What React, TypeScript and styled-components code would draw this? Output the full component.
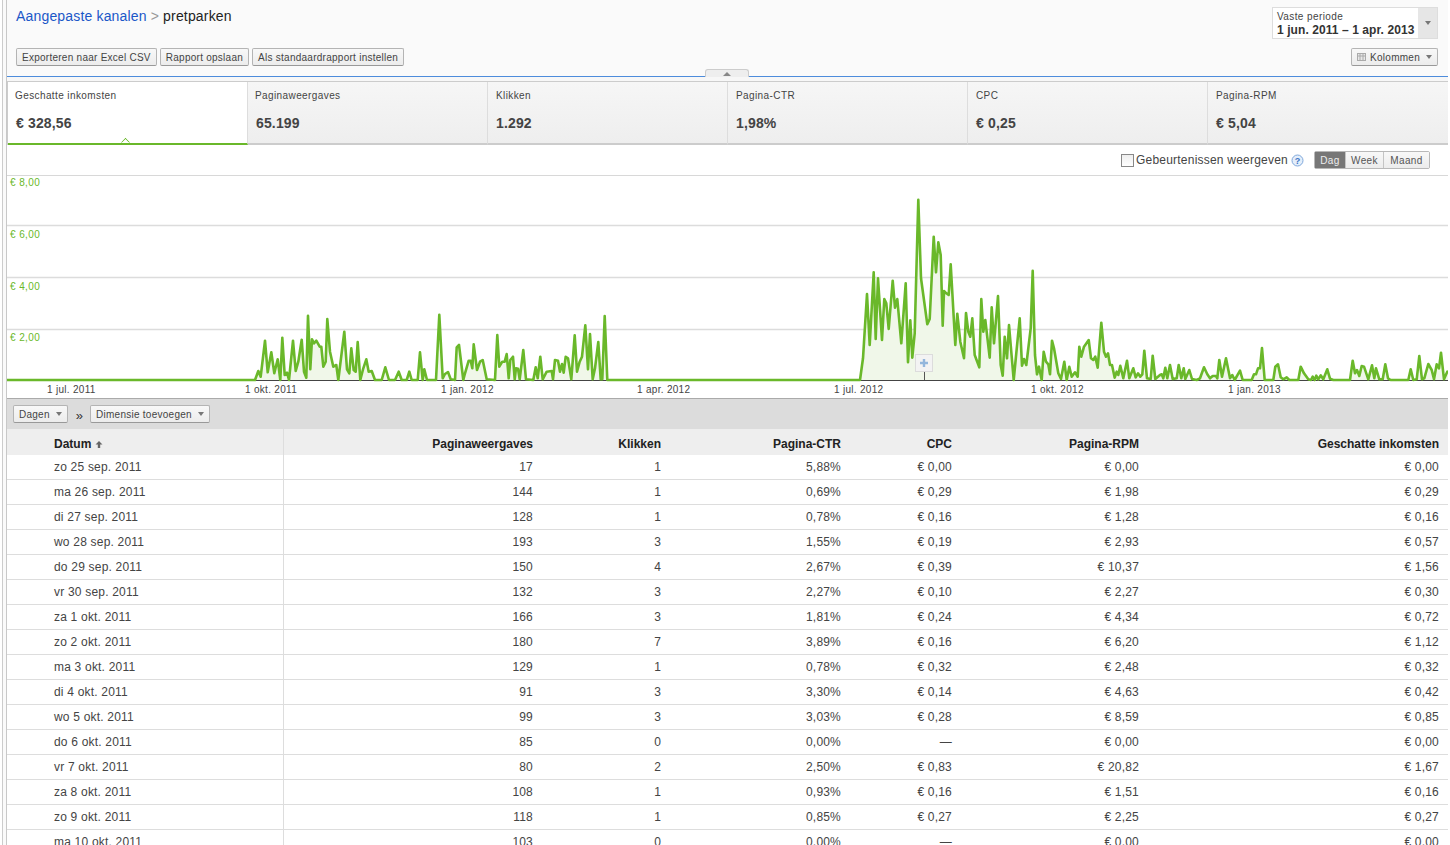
import React from 'react'
import styled, { createGlobalStyle } from 'styled-components'

type Pt = [number, number]

// traced per chart region, numbers are 3x crop coordinates from (x0, y0)
const toPage = (x0: number, y0: number, pts: Pt[]): Pt[] => pts.map(([x, y]) => [x0 + x / 3, y0 + y / 3])

const partA = toPage(255, 310, [
  [0,210],[10,183],[17,200],[30,92],[38,187],[49,127],[58,190],[68,148],[76,210],[82,83],[89,195],[96,188],[102,210],[114,92],[122,183],[130,155],[140,89],[147,185],[154,203],[159,17],[166,178],[171,88],[177,100],[184,92],[194,110],[199,110],[205,170],[212,155],[217,27],[225,125],[235,170],[244,165],[250,210],[268,65],[276,178],[283,190],[289,115],[296,180],[302,185],[308,96],[316,210],[325,175],[334,148],[341,185],[350,183],[360,210],[380,210],[391,172],[402,210],[420,210],[431,185],[440,210],[455,210],[463,185],[470,210],[488,210],[495,127],[503,210],[508,178],[516,210],
])
const partB = toPage(430, 310, [
  [18,210],[28,14],[38,205],[45,192],[54,186],[62,208],[75,210],[80,112],[87,105],[100,210],[105,190],[116,152],[122,152],[127,175],[131,103],[141,180],[150,155],[158,150],[170,208],[195,210],[202,75],[208,170],[217,155],[224,155],[230,132],[236,205],[241,150],[249,140],[254,208],[258,175],[264,176],[269,208],[280,120],[288,208],[310,210],[317,172],[323,205],[331,140],[338,208],[350,185],[365,183],[369,208],[375,150],[384,152],[390,185],[396,162],[401,188],[407,140],[414,145],[424,208],[434,76],[441,185],[449,155],[456,140],[466,46],[474,178],[480,72],[488,208],[495,175],[505,96],[512,208],[517,208],[524,18],[532,210],
])
const partC = toPage(855, 195, [
  [15,555],[24,490],[36,297],[44,450],[56,232],[62,432],[69,250],[81,435],[88,312],[94,325],[101,402],[113,257],[120,338],[127,312],[139,445],[152,265],[159,502],[166,376],[172,488],[179,415],[190,14],[198,250],[217,388],[224,372],[236,125],[243,232],[250,142],[257,180],[263,392],[267,288],[274,295],[281,300],[287,208],[301,450],[307,356],[316,440],[327,490],[333,354],[340,410],[346,425],[352,370],[359,480],[373,517],[379,312],[385,410],[391,375],[404,488],[410,337],[417,445],[429,303],[437,510],[443,542],[449,425],[456,490],[462,390],[476,555],[494,370],[501,512],[507,492],[514,510],[527,400],[533,227],[540,480],[546,538],[552,515],[560,555],[566,470],
])
const partD = toPage(1030, 315, [
  [48,140],[55,148],[60,178],[66,77],[72,100],[85,175],[93,192],[103,140],[110,195],[118,155],[125,185],[135,172],[143,185],[148,95],[154,125],[162,95],[176,75],[183,130],[190,135],[196,125],[203,158],[214,23],[222,110],[228,125],[234,115],[240,150],[246,150],[254,188],[260,170],[265,180],[271,152],[280,190],[291,137],[298,190],[310,160],[317,187],[324,175],[331,185],[337,178],[343,107],[351,190],[362,192],[368,122],[376,192],[390,180],[395,178],[400,190],[406,158],[412,190],[420,150],[428,192],[440,190],[446,150],[454,190],[461,160],[466,192],[478,165],[486,192],[500,195],[510,190],[522,157],[532,178],[540,190],[548,183],[558,183],[562,190],[568,135],[576,185],[588,130],[600,190],[607,180],[614,195],
])
const partE = toPage(1240, 340, [
  [0,92],[8,120],[35,120],[42,103],[48,103],[54,85],[60,85],[66,24],[74,120],[100,120],[106,80],[114,73],[122,112],[130,118],[140,112],[148,120],[175,120],[182,80],[192,100],[205,118],[213,120],[218,110],[224,120],[229,107],[235,118],[242,106],[250,118],[262,88],[270,116],[280,120],[330,120],[338,62],[345,100],[351,90],[358,108],[365,78],[372,80],[385,118],[396,76],[403,115],[408,85],[418,118],[428,118],[436,73],[444,115],[452,120],[505,120],[512,88],[520,120],[530,118],[538,48],[546,118],[553,115],[565,72],[575,90],[582,118],[590,73],[597,85],[603,38],[612,118],[622,95],
])

const BASE = 380
const linePts: Pt[] = [[7, BASE], ...partA, ...partB, ...partC, ...partD, ...partE, [1448, 372]]
const line = linePts.map(([x, y]) => `${x.toFixed(1)},${y.toFixed(1)}`).join(' ')
const area = `7,${BASE} ${line} 1448,${BASE}`

const gridLines = [225.5, 277.5, 329.5]
const yLabels = [
  { y: 185.5, t: '€ 8,00' },
  { y: 237.5, t: '€ 6,00' },
  { y: 289.5, t: '€ 4,00' },
  { y: 340.5, t: '€ 2,00' },
]
const xLabels = [
  { x: 47, t: '1 jul. 2011' },
  { x: 245, t: '1 okt. 2011' },
  { x: 441, t: '1 jan. 2012' },
  { x: 637, t: '1 apr. 2012' },
  { x: 834, t: '1 jul. 2012' },
  { x: 1031, t: '1 okt. 2012' },
  { x: 1228, t: '1 jan. 2013' },
]

const metrics = [
  { label: 'Geschatte inkomsten', value: '€ 328,56' },
  { label: 'Paginaweergaves', value: '65.199' },
  { label: 'Klikken', value: '1.292' },
  { label: 'Pagina-CTR', value: '1,98%' },
  { label: 'CPC', value: '€ 0,25' },
  { label: 'Pagina-RPM', value: '€ 5,04' },
]

const rows = [
  ['zo 25 sep. 2011', '17', '1', '5,88%', '€ 0,00', '€ 0,00', '€ 0,00'],
  ['ma 26 sep. 2011', '144', '1', '0,69%', '€ 0,29', '€ 1,98', '€ 0,29'],
  ['di 27 sep. 2011', '128', '1', '0,78%', '€ 0,16', '€ 1,28', '€ 0,16'],
  ['wo 28 sep. 2011', '193', '3', '1,55%', '€ 0,19', '€ 2,93', '€ 0,57'],
  ['do 29 sep. 2011', '150', '4', '2,67%', '€ 0,39', '€ 10,37', '€ 1,56'],
  ['vr 30 sep. 2011', '132', '3', '2,27%', '€ 0,10', '€ 2,27', '€ 0,30'],
  ['za 1 okt. 2011', '166', '3', '1,81%', '€ 0,24', '€ 4,34', '€ 0,72'],
  ['zo 2 okt. 2011', '180', '7', '3,89%', '€ 0,16', '€ 6,20', '€ 1,12'],
  ['ma 3 okt. 2011', '129', '1', '0,78%', '€ 0,32', '€ 2,48', '€ 0,32'],
  ['di 4 okt. 2011', '91', '3', '3,30%', '€ 0,14', '€ 4,63', '€ 0,42'],
  ['wo 5 okt. 2011', '99', '3', '3,03%', '€ 0,28', '€ 8,59', '€ 0,85'],
  ['do 6 okt. 2011', '85', '0', '0,00%', '—', '€ 0,00', '€ 0,00'],
  ['vr 7 okt. 2011', '80', '2', '2,50%', '€ 0,83', '€ 20,82', '€ 1,67'],
  ['za 8 okt. 2011', '108', '1', '0,93%', '€ 0,16', '€ 1,51', '€ 0,16'],
  ['zo 9 okt. 2011', '118', '1', '0,85%', '€ 0,27', '€ 2,25', '€ 0,27'],
  ['ma 10 okt. 2011', '103', '0', '0,00%', '—', '€ 0,00', '€ 0,00'],
]

const columns = ['Paginaweergaves', 'Klikken', 'Pagina-CTR', 'CPC', 'Pagina-RPM', 'Geschatte inkomsten']

const App = () => {
  return (
    <Page>
      <GlobalStyle />
      <Rail />
      <Main>
        <Header>
          <HeaderLeft>
            <Breadcrumb>
              <CrumbLink>Aangepaste kanalen</CrumbLink>
              <CrumbSep>&gt;</CrumbSep>
              <span>pretparken</span>
            </Breadcrumb>
            <ButtonRow>
              <Button>Exporteren naar Excel CSV</Button>
              <Button>Rapport opslaan</Button>
              <Button>Als standaardrapport instellen</Button>
            </ButtonRow>
          </HeaderLeft>
          <HeaderRight>
            <DatePicker>
              <DateText>
                <DateLabel>Vaste periode</DateLabel>
                <DateValue>1 jun. 2011 – 1 apr. 2013</DateValue>
              </DateText>
              <DateArrow>
                <Caret />
              </DateArrow>
            </DatePicker>
            <Button>
              <ColumnsIcon width='9' height='8' viewBox='0 0 9 8'>
                <rect x='0.5' y='0.5' width='8' height='7' fill='#e8e8e8' stroke='#aaa' />
                <path d='M0 3h9M3 0v8M6 0v8' stroke='#aaa' fill='none' />
              </ColumnsIcon>
              Kolommen
              <Caret />
            </Button>
          </HeaderRight>
          <CollapseTab>
            <CaretUp />
          </CollapseTab>
        </Header>
        <TabGap />
        <TabRow>
          {metrics.map((m, i) => (
            <MetricTab key={m.label} $active={i === 0}>
              <MetricLabel>{m.label}</MetricLabel>
              <MetricValue>{m.value}</MetricValue>
            </MetricTab>
          ))}
        </TabRow>
        <ChartTools>
          <EventsCheck />
          <EventsLabel>Gebeurtenissen weergeven</EventsLabel>
          <svg width='13' height='13' viewBox='0 0 13 13'>
            <circle cx='6.5' cy='6.5' r='5.5' fill='#e4eefa' stroke='#7fa8dc' />
            <text x='6.5' y='10' textAnchor='middle' fontSize='9' fontWeight='bold' fontFamily='Liberation Sans' fill='#3a74c4'>?</text>
          </svg>
          <Segments>
            <Segment $on $w={31}>Dag</Segment>
            <Segment $w={38}>Week</Segment>
            <Segment $w={45}>Maand</Segment>
          </Segments>
        </ChartTools>
        <ChartBox>
          <svg width='1441' height='222' viewBox='7 176 1441 222' style={{ display: 'block' }}>
            {gridLines.map(y => (
              <line key={y} x1='7' x2='1448' y1={y} y2={y} stroke='#dcdcdc' strokeWidth='1.4' />
            ))}
            <polygon points={area} fill='#f0f7e9' />
            <line x1='7' x2='1448' y1='380.5' y2='380.5' stroke='#444' strokeWidth='1' />
            <polyline points={line} fill='none' stroke='#6ab82a' strokeWidth='2.6' strokeLinejoin='round' />
            <line x1='924.5' x2='924.5' y1='372' y2='380' stroke='#555' strokeWidth='1' />
            <rect x='915.5' y='354.5' width='17' height='17' fill='#f3f3f3' stroke='#dcdcdc' />
            <path d='M920 363h8M924 359v8' stroke='#93b6dc' strokeWidth='2.4' fill='none' />
            {yLabels.map(l => (
              <ChartYLabel key={l.t} x='10' y={l.y}>{l.t}</ChartYLabel>
            ))}
            {xLabels.map(l => (
              <ChartXLabel key={l.t} x={l.x} y='393'>{l.t}</ChartXLabel>
            ))}
          </svg>
        </ChartBox>
        <TableTools>
          <Button>
            Dagen
            <Caret />
          </Button>
          <Chevrons>»</Chevrons>
          <Button>
            Dimensie toevoegen
            <Caret />
          </Button>
        </TableTools>
        <HeadRow>
          <DateCell>
            Datum
            <svg width='8' height='8' viewBox='0 0 8 8'>
              <path d='M4 1L7.5 4.5H5.2V8H2.8V4.5H.5z' fill='#666' />
            </svg>
          </DateCell>
          {columns.map(c => (
            <NumCell key={c}>{c}</NumCell>
          ))}
        </HeadRow>
        {rows.map(r => (
          <BodyRow key={r[0]}>
            <DateCell>{r[0]}</DateCell>
            {r.slice(1).map((v, i) => (
              <NumCell key={i}>{v}</NumCell>
            ))}
          </BodyRow>
        ))}
      </Main>
    </Page>
  )
}

const GlobalStyle = createGlobalStyle`
  html, body {
    margin: 0;
    background: #fff;
    overflow: hidden;
  }
  body {
    font-family: "Liberation Sans", Arial, sans-serif;
  }
`

const Page = styled.div`
  display: flex;
  width: 1450px;
  height: 845px;
  overflow: hidden;
  background: #fff;
`

const Rail = styled.div`
  width: 6px;
  flex: none;
  box-sizing: border-box;
  background: linear-gradient(90deg, #fff 2px, #ccc 2px, #ccc 3px, #fafafa 3px);
`

const Main = styled.div`
  width: 1442px;
  flex: none;
  box-sizing: border-box;
  border-left: 1px solid #c8c8c8;
  color: #444;
`

const Header = styled.div`
  position: relative;
  box-sizing: border-box;
  height: 77px;
  background: #fafafa;
  border-bottom: 1px solid #4d8cdc;
  display: flex;
  justify-content: space-between;
`

const HeaderLeft = styled.div`
  padding: 8px 0 0 9px;
`

const HeaderRight = styled.div`
  display: flex;
  flex-direction: column;
  align-items: flex-end;
  gap: 9px;
  padding: 7px 10px 0 0;
`

const Breadcrumb = styled.div`
  display: flex;
  align-items: center;
  height: 16px;
  font-size: 14px;
  letter-spacing: 0.17px;
  color: #222;
  margin-bottom: 24px;
`

const CrumbLink = styled.span`
  color: #1a57c8;
`

const CrumbSep = styled.span`
  color: #999;
  margin: 0 4px;
`

const ButtonRow = styled.div`
  display: flex;
  gap: 3px;
`

const Button = styled.div`
  display: inline-flex;
  align-items: center;
  gap: 6px;
  box-sizing: border-box;
  height: 18px;
  padding: 0 5px;
  font-size: 10px;
  letter-spacing: 0.26px;
  color: #444;
  white-space: nowrap;
  background: linear-gradient(#f8f8f8, #ececec);
  border: 1px solid #b4b4b4;
  border-bottom-color: #999;
  border-radius: 2px;
`

const ColumnsIcon = styled.svg`
  margin-right: -2px;
`

const Caret = styled.span`
  display: inline-block;
  width: 0;
  height: 0;
  border-left: 3.5px solid transparent;
  border-right: 3.5px solid transparent;
  border-top: 4px solid #777;
`

const CaretUp = styled.span`
  display: block;
  width: 0;
  height: 0;
  border-left: 4px solid transparent;
  border-right: 4px solid transparent;
  border-bottom: 4px solid #888;
`

const DatePicker = styled.div`
  display: flex;
  width: 166px;
  height: 32px;
  box-sizing: border-box;
  border: 1px solid #ddd;
  background: #fff;
`

const DateText = styled.div`
  flex: 1;
  padding: 2px 0 0 4px;
`

const DateLabel = styled.div`
  font-size: 10px;
  letter-spacing: 0.4px;
  line-height: 13px;
  color: #444;
`

const DateValue = styled.div`
  font-size: 12px;
  font-weight: bold;
  letter-spacing: 0.08px;
  line-height: 15px;
  white-space: nowrap;
  color: #333;
`

const DateArrow = styled.div`
  width: 19px;
  display: flex;
  align-items: center;
  justify-content: center;
  background: #e6e6e6;
`

const CollapseTab = styled.div`
  position: absolute;
  left: 698px;
  bottom: -1px;
  box-sizing: border-box;
  width: 44px;
  height: 8px;
  display: flex;
  align-items: center;
  justify-content: center;
  background: #eee;
  border: 1px solid #ccc;
  border-bottom: none;
  border-radius: 3px 3px 0 0;
`

const TabGap = styled.div`
  height: 4px;
  background: #f7f7f7;
  border-bottom: 1px solid #ccc;
`

const TabRow = styled.div`
  display: flex;
  padding-left: 1px;
  background: #ccc;
`

const MetricLabel = styled.div`
  font-size: 10px;
  letter-spacing: 0.4px;
  line-height: 13px;
  color: #444;
`

const MetricValue = styled.div`
  margin: 13px 0 0 1px;
  font-size: 14px;
  font-weight: bold;
  letter-spacing: 0.15px;
  line-height: 17px;
  color: #444;
`

const MetricTab = styled.div<{ $active?: boolean }>`
  position: relative;
  box-sizing: border-box;
  width: 240px;
  height: 63px;
  padding: 7px 0 0 7px;
  background: ${({ $active }) => ($active ? '#fff' : 'linear-gradient(#f6f6f6, #eee)')};
  border-right: 1px solid #ddd;
  border-bottom: 2px solid ${({ $active }) => ($active ? '#6ab82a' : '#ccc')};

  &:nth-child(n + 3) ${MetricLabel} {
    margin-left: 1px;
  }

  &:last-child {
    flex: 1;
    border-right: none;
  }

  ${({ $active }) =>
    $active &&
    `
    &::after {
      content: '';
      position: absolute;
      left: 114px;
      bottom: -3px;
      width: 6px;
      height: 6px;
      background: #fff;
      border-top: 1px solid #6ab82a;
      border-left: 1px solid #6ab82a;
      transform: rotate(45deg);
      clip-path: polygon(0 0, 100% 0, 0 100%);
    }
  `}
`

const ChartTools = styled.div`
  display: flex;
  align-items: center;
  justify-content: flex-end;
  box-sizing: border-box;
  height: 31px;
  padding-right: 18px;
  border-bottom: 1px solid #d8d8d8;
`

const EventsCheck = styled.span`
  width: 13px;
  height: 13px;
  box-sizing: border-box;
  border: 1px solid #888;
  background: linear-gradient(#eee, #fff);
  margin-right: 2px;
`

const EventsLabel = styled.span`
  font-size: 12px;
  letter-spacing: 0.22px;
  color: #444;
  margin-right: 3px;
`

const Segments = styled.div`
  display: flex;
  margin-left: 10px;
  height: 18px;
  border: 1px solid #b8b8b8;
  box-sizing: border-box;
  border-radius: 2px;
`

const Segment = styled.div<{ $on?: boolean; $w: number }>`
  display: flex;
  align-items: center;
  justify-content: center;
  box-sizing: border-box;
  width: ${({ $w }) => $w}px;
  font-size: 10px;
  letter-spacing: 0.4px;
  color: ${({ $on }) => ($on ? '#eee' : '#555')};
  background: ${({ $on }) => ($on ? '#777' : 'linear-gradient(#f8f8f8, #ececec)')};
  border-right: 1px solid #c4c4c4;

  &:last-child {
    border-right: none;
  }
`

const ChartBox = styled.div`
  height: 222px;
  border-bottom: 1px solid #aaa;
`

const ChartYLabel = styled.text`
  font-family: "Liberation Sans", Arial, sans-serif;
  font-size: 10px;
  letter-spacing: 0.4px;
  fill: #6ab82a;
`

const ChartXLabel = styled.text`
  font-family: "Liberation Sans", Arial, sans-serif;
  font-size: 10px;
  letter-spacing: 0.3px;
  fill: #444;
`

const TableTools = styled.div`
  display: flex;
  align-items: center;
  gap: 7px;
  box-sizing: border-box;
  height: 30px;
  padding-left: 6px;
  background: #dcdcdc;
`

const Chevrons = styled.span`
  font-size: 13px;
  color: #333;
  margin: 2px 0 0 1px;
`

const HeadRow = styled.div`
  display: grid;
  grid-template-columns: 277px 258px 128px 180px 111px 187px 1fr;
  height: 26px;
  align-items: stretch;
  background: #eee;
  font-size: 12px;
  font-weight: bold;
  color: #222;

  > div {
    padding-top: 4px;
    box-sizing: border-box;
    letter-spacing: 0;
  }
`

const BodyRow = styled.div`
  display: grid;
  grid-template-columns: 277px 258px 128px 180px 111px 187px 1fr;
  box-sizing: border-box;
  height: 25px;
  border-bottom: 1px solid #ddd;
  font-size: 12px;
  letter-spacing: 0.2px;
  color: #444;
`

const DateCell = styled.div`
  display: flex;
  align-items: center;
  gap: 4px;
  padding-left: 47px;
  border-right: 1px solid #ddd;
`

const NumCell = styled.div`
  display: flex;
  align-items: center;
  justify-content: flex-end;
  padding-right: 9px;
`

export default App
